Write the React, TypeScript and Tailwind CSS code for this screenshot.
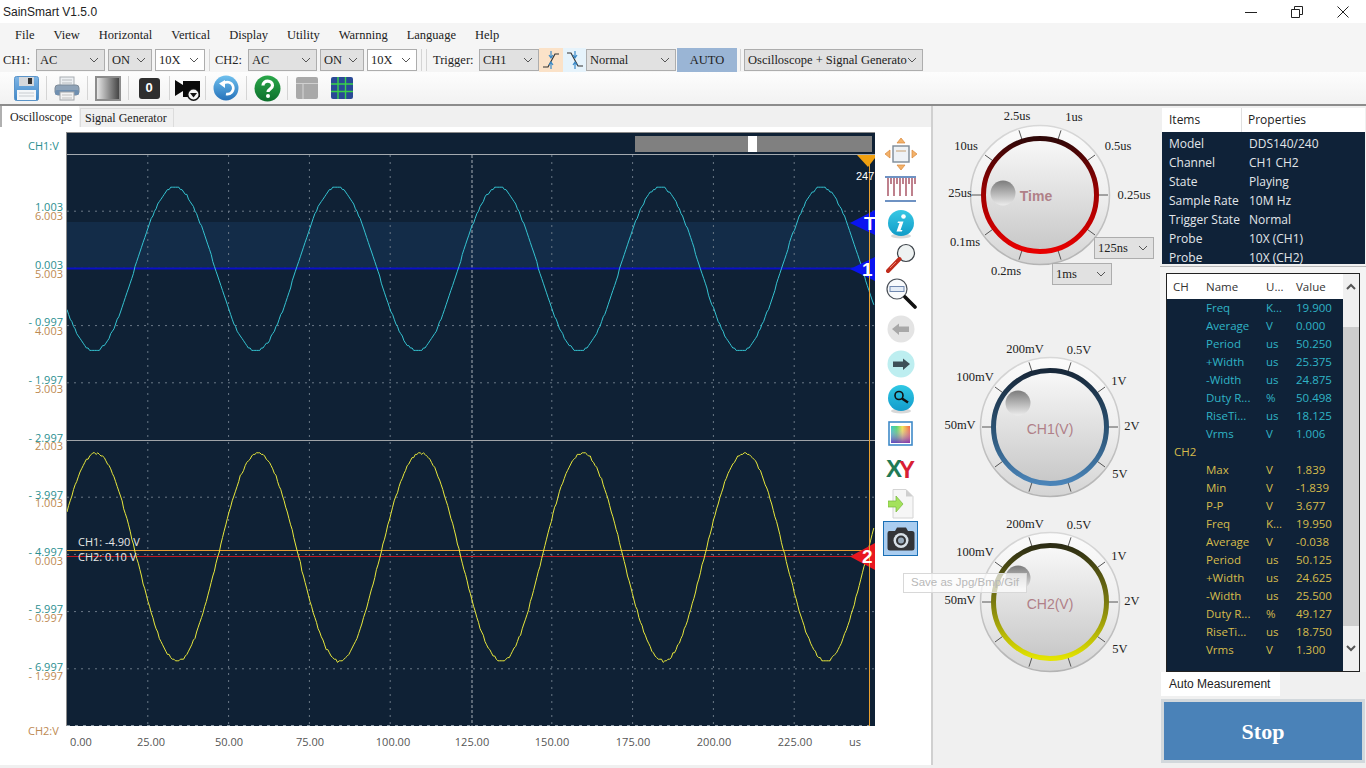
import React from "react";

const serif = "font-['Liberation_Serif',serif]";
const sans = "font-['Open_Sans',sans-serif]";

function Chevron() {
  return (
    <svg width="10" height="6" viewBox="0 0 10 6" className="shrink-0">
      <path d="M1 1 L5 5 L9 1" fill="none" stroke="#555" strokeWidth="1" />
    </svg>
  );
}

function Combo({ w, label, white }: { w: string; label: string; white?: boolean }) {
  return (
    <div className={`${w} h-[22px] shrink-0 flex items-center justify-between pl-[3px] pr-[5px] border border-[#adadad] text-[12.5px] text-[#222] whitespace-nowrap overflow-hidden ${white ? "bg-white" : "bg-[#e1e1e1]"}`}>
      <span>{label}</span>
      <Chevron />
    </div>
  );
}

const Sep = ({ h = "h-[22px]" }: { h?: string }) => <div className={`w-px ${h} bg-[#d4d4d4] shrink-0`} />;

function TrigIcon({ rising }: { rising?: boolean }) {
  return (
    <svg width="20" height="20" viewBox="0 0 20 20">
      <path d={rising ? "M2 17 H7 L14 4 H18" : "M2 3 H6 L13 16 H18"} fill="none" stroke="#333" strokeWidth="1.2" />
      <path d="M10 1 V7 M8 5 L10 8 L12 5 M10 19 V13 M8 15 L10 12 L12 15" fill="none" stroke="#3a8ac8" strokeWidth="1.2" />
    </svg>
  );
}

/* ---------- toolbar icons ---------- */
const FloppyIcon = () => (
  <svg width="25" height="25" viewBox="0 0 25 25">
    <defs>
      <linearGradient id="fl" x1="0" x2="0" y1="0" y2="1"><stop offset="0" stopColor="#7fb6e6" /><stop offset="1" stopColor="#3f87c8" /></linearGradient>
    </defs>
    <rect x="0.5" y="0.5" width="24" height="24" rx="2" fill="url(#fl)" stroke="#5b94c8" />
    <rect x="5" y="1" width="15" height="9" fill="#d5d8dc" />
    <rect x="14" y="2" width="4" height="6" fill="#333" />
    <rect x="3" y="14" width="19" height="10" fill="#f4f6f8" />
    <path d="M5 17 H20 M5 20 H20" stroke="#c8ccd0" />
  </svg>
);
const PrinterIcon = () => (
  <svg width="26" height="25" viewBox="0 0 26 25">
    <rect x="6" y="1" width="14" height="9" fill="#eceff2" stroke="#a8adb2" />
    <path d="M8 4 H18 M8 7 H18" stroke="#b8bcc0" />
    <rect x="1" y="9" width="24" height="10" rx="3" fill="#8fa3b8" stroke="#7d8a98" />
    <rect x="1" y="14" width="24" height="5" rx="2" fill="#6f8fb0" />
    <rect x="6" y="16" width="14" height="8" fill="#f2f2f2" stroke="#a0a4a8" />
    <path d="M8 19 H18 M8 22 H18" stroke="#c0c0c0" />
  </svg>
);
const GradSquare = () => (
  <svg width="26" height="25" viewBox="0 0 26 25">
    <defs>
      <linearGradient id="gs" x1="0" x2="1" y1="0" y2="0"><stop offset="0" stopColor="#eeeeee" /><stop offset="1" stopColor="#3e3e3e" /></linearGradient>
    </defs>
    <rect x="1" y="1" width="24" height="23" fill="url(#gs)" stroke="#8c8c8c" strokeWidth="2" />
  </svg>
);
const BlackCam = () => (
  <svg width="26" height="26" viewBox="0 0 26 26">
    <path d="M0 5 L8 10 V6 H25 V22 H8 V16 L0 21 Z" fill="#0a0a0a" />
    <circle cx="18.5" cy="19.5" r="6.5" fill="#111" />
    <circle cx="18.5" cy="19.5" r="5" fill="#f4f4f4" />
    <path d="M15 18 H22 L18.5 22.5 Z" fill="#111" />
  </svg>
);
const RefreshIcon = () => (
  <svg width="26" height="26" viewBox="0 0 26 26">
    <defs>
      <linearGradient id="rf" x1="0" x2="0" y1="0" y2="1"><stop offset="0" stopColor="#6fc0ee" /><stop offset="1" stopColor="#2672ba" /></linearGradient>
    </defs>
    <circle cx="13" cy="13" r="12.5" fill="url(#rf)" />
    <path d="M10 9 A6 6 0 1 1 13 19" fill="none" stroke="#fff" strokeWidth="2.6" />
    <path d="M6 8.5 L12 5 L12 13 Z" fill="#fff" />
  </svg>
);
const HelpIcon = () => (
  <svg width="27" height="27" viewBox="0 0 27 27">
    <defs>
      <linearGradient id="hp" x1="0" x2="0" y1="0" y2="1"><stop offset="0" stopColor="#2aa84a" /><stop offset="1" stopColor="#0d6f2c" /></linearGradient>
    </defs>
    <circle cx="13.5" cy="13.5" r="13" fill="url(#hp)" />
    <path d="M9 10.5 C9 4.5 18.5 5 18.5 10.5 C18.5 14 14 14 14 17" fill="none" stroke="#fff" strokeWidth="3.2" />
    <circle cx="14" cy="21" r="2" fill="#fff" />
  </svg>
);
const GrayTable = () => (
  <svg width="22" height="22" viewBox="0 0 22 22">
    <rect x="0" y="0" width="22" height="22" rx="2" fill="#a9a9a9" />
    <path d="M0 6.5 H22 M7 6.5 V22" stroke="#d0d0d0" strokeWidth="1.2" />
  </svg>
);
const BlueGrid = () => (
  <svg width="22" height="22" viewBox="0 0 22 22">
    <rect x="0" y="0" width="22" height="22" rx="2" fill="#2a4a96" />
    <path d="M0 7 H22 M0 14.5 H22 M7 0 V22 M14.5 0 V22" stroke="#39d24a" strokeWidth="1.4" />
  </svg>
);

/* ---------- side icons ---------- */
const side = {
  expand: (
    <svg width="32" height="32" viewBox="0 0 32 32">
      <rect x="8" y="8" width="16" height="16" fill="#eef2f6" stroke="#7c8a98" strokeWidth="1.4" />
      <path d="M11 13 H21" stroke="#c8a070" />
      <path d="M16 0 L20 5 H12 Z M16 32 L20 27 H12 Z M0 16 L5 12 V20 Z M32 16 L27 12 V20 Z" fill="#f3b26a" stroke="#d8863a" strokeWidth="0.7" />
    </svg>
  ),
  comb: (
    <svg width="32" height="26" viewBox="0 0 32 26">
      <path d="M0 1 H31 M0 25 H31" stroke="#3f6fb0" strokeWidth="1.3" />
      <path d="M3 2 V20 M9 2 V20 M15 2 V20 M21 2 V20 M27 2 V20 M6 2 V8 M12 2 V8 M18 2 V8 M24 2 V8 M30 2 V8" stroke="#8a1a30" strokeWidth="1.1" />
    </svg>
  ),
  info: (
    <svg width="28" height="30" viewBox="0 0 28 30">
      <defs>
        <linearGradient id="ci" x1="0" x2="0" y1="0" y2="1"><stop offset="0" stopColor="#38c8e4" /><stop offset="1" stopColor="#119cc8" /></linearGradient>
      </defs>
      <ellipse cx="14" cy="27" rx="10" ry="2.5" fill="#d8d8d8" />
      <circle cx="14" cy="14" r="13" fill="url(#ci)" />
      <circle cx="16.5" cy="7.5" r="2.3" fill="#fff" />
      <path d="M11 12.5 H16.5 L13.5 21 H15.5 L14.8 22.5 H9.5 L12.5 14 H10.5 Z" fill="#fff" />
    </svg>
  ),
  zoomIn: (
    <svg width="30" height="32" viewBox="0 0 30 32">
      <circle cx="20" cy="10" r="8.5" fill="#eef2f2" stroke="#3c4248" strokeWidth="1.2" />
      <path d="M13.5 16 L2 28" stroke="#c02c1c" strokeWidth="4" strokeLinecap="round" />
      <path d="M4 25 L10 19" stroke="#f08070" strokeWidth="1" />
    </svg>
  ),
  zoomOut: (
    <svg width="32" height="32" viewBox="0 0 32 32">
      <circle cx="12" cy="11" r="10" fill="#f8fafc" stroke="#4a5058" strokeWidth="1.2" />
      <rect x="5" y="8.5" width="14" height="5" fill="#e4ecf6" stroke="#7088b0" />
      <path d="M20 19 L30 29" stroke="#111" strokeWidth="3.6" strokeLinecap="round" />
    </svg>
  ),
  back: (
    <svg width="28" height="28" viewBox="0 0 28 28">
      <circle cx="14" cy="14" r="13.5" fill="#e4e4e4" />
      <path d="M5 14 L12 8.5 V11.5 H22 V17 H12 V20 Z" fill="#a8a8a8" />
    </svg>
  ),
  fwd: (
    <svg width="28" height="28" viewBox="0 0 28 28">
      <circle cx="14" cy="14" r="13.5" fill="#bdeef0" />
      <path d="M23 14 L16 8.5 V11.5 H6 V17 H16 V20 Z" fill="#3e5058" />
    </svg>
  ),
  search: (
    <svg width="28" height="30" viewBox="0 0 28 30">
      <defs>
        <linearGradient id="cs" x1="0" x2="0" y1="0" y2="1"><stop offset="0" stopColor="#30c8e4" /><stop offset="1" stopColor="#129ccc" /></linearGradient>
      </defs>
      <ellipse cx="14" cy="27" rx="10" ry="2.5" fill="#d8d8d8" />
      <circle cx="14" cy="14" r="13" fill="url(#cs)" />
      <circle cx="12" cy="11.5" r="4" fill="none" stroke="#111" strokeWidth="1.6" />
      <path d="M15 14.5 L21 18.5" stroke="#111" strokeWidth="2.4" />
    </svg>
  ),
  palette: (
    <svg width="25" height="25" viewBox="0 0 25 25">
      <defs>
        <linearGradient id="rb" x1="0" x2="1" y1="0" y2="0"><stop offset="0" stopColor="#20c0c0" /><stop offset="0.3" stopColor="#40d060" /><stop offset="0.6" stopColor="#f0e040" /><stop offset="1" stopColor="#f05030" /></linearGradient>
        <linearGradient id="rb2" x1="0" x2="0" y1="0" y2="1"><stop offset="0" stopColor="#fff" stopOpacity="0.1" /><stop offset="1" stopColor="#7030c0" stopOpacity="0.85" /></linearGradient>
      </defs>
      <rect x="1" y="1" width="23" height="23" fill="#fff" stroke="#3f8ac8" strokeWidth="1.6" />
      <rect x="3" y="5" width="19" height="17" fill="url(#rb)" />
      <rect x="3" y="5" width="19" height="17" fill="url(#rb2)" />
    </svg>
  ),
  xy: (
    <svg width="30" height="24" viewBox="0 0 30 24">
      <text x="0" y="20" fontFamily="Liberation Sans, sans-serif" fontWeight="700" fontSize="24" fill="#1f7a55">X</text>
      <text x="13" y="21" fontFamily="Liberation Sans, sans-serif" fontWeight="700" fontSize="24" fill="#d81f35">Y</text>
    </svg>
  ),
  doc: (
    <svg width="26" height="30" viewBox="0 0 26 30">
      <path d="M5 0.5 H18 L25 7.5 V29 H5 Z" fill="#f6f6f6" stroke="#d4d4d4" />
      <path d="M18 0.5 L25 7.5 H18 Z" fill="#cfcfcf" />
      <path d="M0 12 H8 V7 L15 15 L8 23 V18 H0 Z" fill="#a4e25c" stroke="#76b83a" strokeWidth="0.7" />
    </svg>
  ),
  camera: (
    <svg width="28" height="24" viewBox="0 0 28 24">
      <path d="M2 4 H8 L10 0.5 H19 L21 4 H25 Q27.5 4 27.5 6.5 V21 Q27.5 23.5 25 23.5 H3 Q0.5 23.5 0.5 21 V6.5 Q0.5 4 2 4 Z" fill="#333438" />
      <circle cx="14" cy="13.5" r="7.5" fill="#d8e0e8" />
      <circle cx="14" cy="13.5" r="5" fill="#333438" />
      <circle cx="14" cy="13.5" r="3" fill="#9ab" />
    </svg>
  ),
};

/* ---------- chart ---------- */
function wave(c: number, a: number, peak: number, period: number, q: number, noise: number) {
  let d = "";
  let i = 0;
  for (let x = 67; x <= 875; x += 1.62) {
    const n = noise * Math.sin(i * 12.9898) * Math.cos(i * 4.1414);
    const y = c - a * Math.cos((2 * Math.PI * (x - peak)) / period) + n;
    const qy = Math.round(y / q) * q;
    d += `${i === 0 ? "M" : "L"}${x.toFixed(1)} ${qy.toFixed(1)} `;
    i++;
  }
  return d;
}

const vGrid = [1, 2, 3, 4, 6, 7, 8, 9].map((k) => 67 + 80.8 * k);
const hGrid = [1, 2, 3, 4, 6, 7, 8, 9].map((k) => 154 + 57.2 * k);

const ch1Labels: [string, number][] = [
  ["1.003", 206], ["0.003", 264], ["- 0.997", 321], ["- 1.997", 379], ["- 2.997", 437],
  ["- 3.997", 494], ["- 4.997", 551], ["- 5.997", 608], ["- 6.997", 666],
];
const ch2Labels: [string, number][] = [
  ["6.003", 215], ["5.003", 273], ["4.003", 330], ["3.003", 388], ["2.003", 445],
  ["1.003", 502], ["0.003", 560], ["- 0.997", 617], ["- 1.997", 675],
];
const xLabels: [string, number][] = [
  ["0.00", 81], ["25.00", 151], ["50.00", 229], ["75.00", 310], ["100.00", 393],
  ["125.00", 472], ["150.00", 552], ["175.00", 633], ["200.00", 714], ["225.00", 795], ["us", 855],
];

function Chart() {
  return (
    <div className={`relative w-[883px] h-[637px] shrink-0 text-[11px] ${sans}`}>
      {ch1Labels.map(([t, y]) => (
        <span key={"a" + y} className="absolute right-[820px] text-[#2b8f90] leading-none whitespace-nowrap" style={{ top: y - 127 - 5 }}>{t}</span>
      ))}
      {ch2Labels.map(([t, y]) => (
        <span key={"b" + y} className="absolute right-[820px] text-[#bd8a52] leading-none whitespace-nowrap" style={{ top: y - 127 - 5 }}>{t}</span>
      ))}
      <span className="absolute left-[28px] top-[13px] leading-none text-[#2b8f90]">CH1:V</span>
      <span className="absolute left-[28px] top-[598px] leading-none text-[#bd8a52]">CH2:V</span>
      {xLabels.map(([t, x]) => (
        <span key={t} className="absolute top-[609px] -translate-x-1/2 leading-none text-[#555]" style={{ left: x }}>{t}</span>
      ))}
      <div className="absolute left-[66px] top-[5px] w-[809px] h-[594px] border-l border-t border-[#8a8a8a] bg-[#0f2135]">
        <svg width="808" height="593" viewBox="67 133 808 593" className="block">
          <rect x="67" y="222" width="808" height="46" fill="#132c48" />
          {vGrid.map((x) => (
            <line key={x} x1={x} x2={x} y1="155" y2="726" stroke="#6a7886" strokeDasharray="2 5" />
          ))}
          {hGrid.map((y) => (
            <line key={y} x1="67" x2="875" y1={y} y2={y} stroke="#6a7886" strokeDasharray="2 5" />
          ))}
          <line x1="472" x2="472" y1="155" y2="726" stroke="#a8b0b8" strokeDasharray="3 2" />
          <line x1="67" x2="875" y1="440.5" y2="440.5" stroke="#a0a4a8" />
          <line x1="67" x2="875" y1="154.5" y2="154.5" stroke="#a4aab0" />
          <line x1="67" x2="875" y1="725.5" y2="725.5" stroke="#8a98a4" strokeDasharray="3 5" />
          <rect x="635" y="136" width="237" height="16" fill="#808080" />
          <rect x="748" y="136" width="9" height="16" fill="#ffffff" />
          <line x1="67" x2="875" y1="268.5" y2="268.5" stroke="#0a10c8" strokeWidth="2" />
          <line x1="67" x2="875" y1="550.5" y2="550.5" stroke="#e8a030" />
          <line x1="67" x2="875" y1="556.5" y2="556.5" stroke="#c01820" />
          <path d={wave(269, 82, 175, 161.7, 2.4, 0)} fill="none" stroke="#35c4d2" />
          <path d={wave(557, 104, 96, 162.2, 1.6, 1)} fill="none" stroke="#e8e83c" />
          <path d="M850 223 L875 210 V235 Z" fill="#0a14f0" />
          <path d="M850 269 L875 257 V281 Z" fill="#0a14f0" />
          <path d="M850 556.5 L875 543 V570 Z" fill="#e81820" />
          <line x1="869.5" x2="869.5" y1="155" y2="726" stroke="#e8a030" />
          <path d="M857 155 H875 V158 L868 167 Z" fill="#f0a010" />
          <text x="856" y="180" fontSize="11" fill="#fff" fontFamily="Liberation Sans, sans-serif">247</text>
          <text x="864" y="230" fontSize="19" fontWeight="700" fill="#fff" fontFamily="Liberation Sans, sans-serif">T</text>
          <text x="862" y="276" fontSize="19" fontWeight="700" fill="#fff" fontFamily="Liberation Sans, sans-serif">1</text>
          <text x="862" y="563" fontSize="19" fontWeight="700" fill="#fff" fontFamily="Liberation Sans, sans-serif">2</text>
        </svg>
      </div>
      <span className="absolute left-[78px] top-[409px] text-[#e8e8e8] leading-none whitespace-nowrap">CH1: -4.90 V</span>
      <span className="absolute left-[78px] top-[424px] text-[#e8e8e8] leading-none whitespace-nowrap">CH2: 0.10 V</span>
    </div>
  );
}

/* ---------- knobs ---------- */
type KnobLabel = [string, number, number];
function Knob({ id, cx, cy, h, name, bold, ringTop, ringMid, ringBottom, dot, labels, children }: {
  id: string; cx: number; cy: number; h: string; name: string; bold?: boolean;
  ringTop: string; ringMid: string; ringBottom: string; dot: [number, number]; labels: KnobLabel[]; children?: React.ReactNode;
}) {
  const ticks = [0, 36, 72, 108, 144, 180, 216, 252, 288, 324];
  return (
    <div className={`relative w-[227px] ${h} shrink-0`}>
      <svg width="150" height="150" viewBox="-75 -75 150 150" className="absolute" style={{ left: cx - 75, top: cy - 75 }}>
        <defs>
          <linearGradient id={id + "o"} x1="0" x2="0" y1="0" y2="1"><stop offset="0" stopColor="#fbfbfb" /><stop offset="0.5" stopColor="#efefef" /><stop offset="1" stopColor="#d4d4d4" /></linearGradient>
          <linearGradient id={id + "e"} x1="0" x2="0" y1="0" y2="1"><stop offset="0" stopColor="#d8d8d8" /><stop offset="1" stopColor="#b4b4b4" /></linearGradient>
          <linearGradient id={id + "i"} x1="0" x2="0" y1="0" y2="1"><stop offset="0" stopColor="#f8f8f8" /><stop offset="1" stopColor="#c8c8c8" /></linearGradient>
          <linearGradient id={id + "r"} x1="0" x2="0" y1="0" y2="1"><stop offset="0" stopColor={ringTop} /><stop offset="0.5" stopColor={ringMid} /><stop offset="1" stopColor={ringBottom} /></linearGradient>
          <linearGradient id={id + "d"} x1="0" x2="0" y1="0" y2="1"><stop offset="0" stopColor="#7c7c7c" /><stop offset="1" stopColor="#ececec" /></linearGradient>
        </defs>
        <circle r="69.5" fill={`url(#${id}o)`} stroke={`url(#${id}e)`} strokeWidth="1.5" />
        {ticks.map((a) => (
          <line key={a} x1={57 * Math.cos((a * Math.PI) / 180)} y1={57 * Math.sin((a * Math.PI) / 180)} x2={68 * Math.cos((a * Math.PI) / 180)} y2={68 * Math.sin((a * Math.PI) / 180)} stroke="#555" />
        ))}
        <circle r="55" fill={`url(#${id}i)`} />
        <circle r="56.5" fill="none" stroke={`url(#${id}r)`} strokeWidth="5" />
        <circle cx={dot[0]} cy={dot[1]} r="12.5" fill={`url(#${id}d)`} />
      </svg>
      <span className={`absolute -translate-x-1/2 -translate-y-1/2 font-['Liberation_Sans',sans-serif] text-[14px] text-[#b08088] leading-none ${bold ? "font-bold" : ""}`} style={{ left: cx + (bold ? -4 : 0), top: cy + (bold ? 1 : 2) }}>{name}</span>
      {labels.map(([t, x, y]) => (
        <span key={t} className={`absolute -translate-x-1/2 -translate-y-1/2 ${serif} text-[12.5px] text-[#222] leading-none whitespace-nowrap`} style={{ left: x, top: y }}>{t}</span>
      ))}
      {children}
    </div>
  );
}

const chLabels = (o: number): KnobLabel[] => [
  ["200mV", 1025 - 933, 349 - 340 + o], ["0.5V", 1079 - 933, 350 - 340 + o], ["1V", 1119 - 933, 381 - 340 + o],
  ["2V", 1132 - 933, 426 - 340 + o], ["5V", 1120 - 933, 474 - 340 + o], ["100mV", 975 - 933, 377 - 340 + o], ["50mV", 960 - 933, 425 - 340 + o],
];

/* ---------- tables ---------- */
const info = [
  ["Model", "DDS140/240"], ["Channel", "CH1 CH2"], ["State", "Playing"], ["Sample Rate", "10M Hz"],
  ["Trigger State", "Normal"], ["Probe", "10X (CH1)"], ["Probe", "10X (CH2)"],
];
const meas1 = [
  ["Freq", "K...", "19.900"], ["Average", "V", "0.000"], ["Period", "us", "50.250"], ["+Width", "us", "25.375"],
  ["-Width", "us", "24.875"], ["Duty R...", "%", "50.498"], ["RiseTi...", "us", "18.125"], ["Vrms", "V", "1.006"],
];
const meas2 = [
  ["Max", "V", "1.839"], ["Min", "V", "-1.839"], ["P-P", "V", "3.677"], ["Freq", "K...", "19.950"], ["Average", "V", "-0.038"],
  ["Period", "us", "50.125"], ["+Width", "us", "24.625"], ["-Width", "us", "25.500"], ["Duty R...", "%", "49.127"],
  ["RiseTi...", "us", "18.750"], ["Vrms", "V", "1.300"],
];
const cols = "grid grid-cols-[39px_60px_30px_47px] items-center h-[18px]";

function MeasRow({ r, c }: { r: string[]; c: string }) {
  return (
    <div className={`${cols} ${c}`}>
      <span />
      <span>{r[0]}</span>
      <span>{r[1]}</span>
      <span>{r[2]}</span>
    </div>
  );
}

const menus = ["File", "View", "Horizontal", "Vertical", "Display", "Utility", "Warnning", "Language", "Help"];
const sideKeys = ["expand", "comb", "info", "zoomIn", "zoomOut", "back", "fwd", "search", "palette", "xy", "doc"] as const;

export default function App() {
  return (
    <div className={`relative w-[1366px] h-[768px] overflow-hidden bg-[#f0f0f0] flex flex-col ${serif}`}>
      {/* title bar */}
      <div className="h-[23px] bg-white flex items-center justify-between shrink-0">
        <span className="pl-[3px] font-['Liberation_Sans',sans-serif] text-[12px] text-[#222]">SainSmart V1.5.0</span>
        <div className="flex items-center h-full">
          <div className="w-[46px] flex justify-center"><svg width="12" height="12"><path d="M0 6.5 H12" stroke="#222" /></svg></div>
          <div className="w-[46px] flex justify-center"><svg width="12" height="12"><path d="M0.5 3.5 H8.5 V11.5 H0.5 Z M3.5 3 V0.5 H11.5 V8.5 H9" fill="none" stroke="#222" /></svg></div>
          <div className="w-[46px] flex justify-center"><svg width="12" height="12"><path d="M0.5 0.5 L11.5 11.5 M11.5 0.5 L0.5 11.5" stroke="#222" /></svg></div>
        </div>
      </div>
      {/* menu */}
      <div className="h-[25px] bg-[#f5f5f5] flex items-center gap-[19px] pl-[15px] text-[12.5px] text-[#222] shrink-0">
        {menus.map((m) => <span key={m}>{m}</span>)}
      </div>
      {/* toolbar 1 */}
      <div className="h-[24px] bg-[#f5f5f5] flex items-center text-[12.5px] text-[#222] shrink-0">
        <span className="w-[36px] pl-[3px] shrink-0">CH1:</span>
        <Combo w="w-[69px]" label="AC" />
        <div className="w-[3px]" />
        <Combo w="w-[44px]" label="ON" />
        <div className="w-[3px]" />
        <Combo w="w-[50px]" label="10X" white />
        <div className="w-[4px]" /><Sep /><div className="w-[5px]" />
        <span className="w-[33px] shrink-0">CH2:</span>
        <Combo w="w-[69px]" label="AC" />
        <div className="w-[3px]" />
        <Combo w="w-[44px]" label="ON" />
        <div className="w-[3px]" />
        <Combo w="w-[50px]" label="10X" white />
        <div className="w-[4px]" /><Sep /><div className="w-[4px]" /><Sep /><div className="w-[6px]" />
        <span className="w-[46px] shrink-0">Trigger:</span>
        <Combo w="w-[60px]" label="CH1" />
        <div className="w-[24px] h-[24px] bg-[#fbe2c8] flex items-center justify-center shrink-0"><TrigIcon rising /></div>
        <div className="w-[23px] h-[24px] bg-[#e6f3fb] flex items-center justify-center shrink-0"><TrigIcon /></div>
        <Combo w="w-[90px]" label="Normal" />
        <div className="w-[60px] h-[24px] ml-px bg-[#9ab5d5] flex items-center justify-center shrink-0">AUTO</div>
        <div className="w-[3px]" /><Sep /><div className="w-[3px]" />
        <Combo w="w-[179px]" label="Oscilloscope + Signal Generato" />
      </div>
      {/* toolbar 2 */}
      <div className="h-[32px] bg-[linear-gradient(#fdfdfd,#f2f2f2)] flex items-center pl-[6px] shrink-0">
        <div className="w-[40px] flex justify-center"><FloppyIcon /></div><Sep h="h-[24px]" />
        <div className="w-[40px] flex justify-center"><PrinterIcon /></div><Sep h="h-[24px]" />
        <div className="w-[40px] flex justify-center"><GradSquare /></div><Sep h="h-[24px]" />
        <div className="w-[40px] flex justify-center">
          <div className="w-[21px] h-[21px] rounded-[3px] bg-[#2e2e2e] text-white text-[13px] font-bold font-['Liberation_Sans',sans-serif] flex items-center justify-center">0</div>
        </div><Sep h="h-[24px]" />
        <div className="w-[35px] flex justify-center"><BlackCam /></div><Sep h="h-[24px]" />
        <div className="w-[40px] flex justify-center"><RefreshIcon /></div><Sep h="h-[24px]" />
        <div className="w-[40px] flex justify-center"><HelpIcon /></div><Sep h="h-[24px]" />
        <div className="w-[38px] flex justify-center"><GrayTable /></div>
        <div className="w-[32px] flex justify-center"><BlueGrid /></div>
      </div>
      {/* main */}
      <div className="flex h-[661px] border-t-2 border-[#8c8c8c] shrink-0">
        {/* left */}
        <div className="w-[933px] h-[659px] flex flex-col shrink-0 border-r-2 border-[#d0d0d0] border-l-2 border-l-[#b0b0b0]">
          <div className="h-[21px] flex items-end text-[12px] text-[#222] shrink-0 bg-[#f0f0f0]">
            <div className="w-[77px] h-[21px] bg-white flex items-center pl-[8px]">Oscilloscope</div>
            <div className="w-[94px] h-[19px] ml-px bg-[#f0f0f0] border border-b-0 border-[#dcdcdc] flex items-center pl-[4px] whitespace-nowrap">Signal Generator</div>
          </div>
          <div className="flex-1 bg-white flex -ml-[2px]">
            <Chart />
            <div className="w-[35px] ml-[0px] pt-[9px] flex flex-col items-center">
              {sideKeys.map((k) => (
                <div key={k} className="w-[35px] h-[35px] flex items-center justify-center shrink-0">{side[k]}</div>
              ))}
              <div className="w-[35px] h-[35px] bg-[#aacdf0] border border-[#1a6fb5] flex items-center justify-center shrink-0">{side.camera}</div>
            </div>
          </div>
        </div>
        {/* knobs */}
        <div className="w-[227px] flex flex-col shrink-0 bg-[#f0f0f0]">
          <Knob id="t" cx={107} cy={89} h="h-[189px]" name="Time" bold ringTop="#300808" ringMid="#a00000" ringBottom="#e80000" dot={[-37, -2]}
            labels={[["2.5us", 84, 10], ["1us", 141, 11], ["0.5us", 185, 40], ["0.25us", 201, 89], ["25us", 27, 87], ["10us", 33, 40], ["0.1ms", 32, 136], ["0.2ms", 73, 165]]}>
            <div className={`absolute left-[161px] top-[131px] text-[12.5px] text-[#222]`}><Combo w="w-[60px]" label="125ns" /></div>
            <div className={`absolute left-[119px] top-[157px] text-[12.5px] text-[#222]`}><Combo w="w-[60px]" label="1ms" /></div>
          </Knob>
          <div className="h-[45px] shrink-0" />
          <Knob id="c1" cx={117} cy={87} h="h-[175px]" name="CH1(V)" ringTop="#18283a" ringMid="#2a5070" ringBottom="#4a84b8" dot={[-32, -24]} labels={chLabels(0)} />
          <Knob id="c2" cx={117} cy={87} h="h-[175px]" name="CH2(V)" ringTop="#2c2c14" ringMid="#7a7a10" ringBottom="#e4e400" dot={[-32, -24]} labels={chLabels(0)} />
        </div>
        {/* right */}
        <div className={`w-[206px] flex flex-col shrink-0 ${sans}`}>
          <div className="mt-[2px] ml-[2px] mr-[1px] h-[156px] overflow-hidden bg-[#0f2238] text-[12px] text-[#e2e6ea] shrink-0">
            <div className="h-[24px] bg-white text-[#222] flex items-center">
              <span className="w-[80px] pl-[7px] h-full flex items-center border-r border-[#e0e0e0]">Items</span>
              <span className="pl-[6px]">Properties</span>
            </div>
            <div className="pt-[2px]">
              {info.map((r, i) => (
                <div key={i} className="h-[19px] flex items-center">
                  <span className="w-[80px] pl-[7px] whitespace-nowrap">{r[0]}</span>
                  <span className="pl-[7px]">{r[1]}</span>
                </div>
              ))}
            </div>
          </div>
          <div className="mt-[2px] h-[406px] bg-[#f4f4f4] border-t border-[#b8b8b8] pl-[6px] pr-[6px] pt-[6px] shrink-0">
            <div className="h-[399px] flex bg-[#0f2238] border border-[#222]">
              <div className="w-[176px] flex flex-col text-[11.5px]">
                <div className="h-[25px] bg-white text-[#333] grid grid-cols-[32px_60px_30px_54px] items-center">
                  <span className="pl-[6px]">CH</span>
                  <span className="pl-[7px]">Name</span>
                  <span className="pl-[7px]">U...</span>
                  <span className="pl-[7px]">Value</span>
                </div>
                {meas1.map((r, i) => <MeasRow key={i} r={r} c="text-[#2fb4c6]" />)}
                <div className="h-[18px] flex items-center pl-[7px] text-[#d6bc4c]">CH2</div>
                {meas2.map((r, i) => <MeasRow key={i} r={r} c="text-[#d6bc4c]" />)}
              </div>
              <div className="w-[17px] bg-[#f0f0f0] flex flex-col h-full">
                <div className="h-[25px] flex items-center justify-center"><svg width="10" height="7"><path d="M1 6 L5 2 L9 6" fill="none" stroke="#555" strokeWidth="2" /></svg></div>
                <div className="mt-[28px] h-[299px] bg-[#cdcdcd]" />
                <div className="flex-1 flex items-center justify-center"><svg width="10" height="7"><path d="M1 1 L5 5 L9 1" fill="none" stroke="#555" strokeWidth="2" /></svg></div>
              </div>
            </div>
          </div>
          <div className="h-[25px] flex shrink-0 ml-px">
            <div className="w-[119px] h-[24px] bg-white text-[12px] text-[#222] flex items-center pl-[8px] font-['Liberation_Sans',sans-serif]">Auto Measurement</div>
          </div>
          <div className={`ml-px mr-px mt-[2px] h-[64px] bg-[#4a82b8] border-[3px] border-[#d2d8dc] flex items-center justify-center text-white font-bold text-[22px] shrink-0 ${serif}`}>Stop</div>
        </div>
      </div>
      {/* tooltip */}
      <div className="absolute left-[903px] top-[573px] w-[124px] h-[20px] bg-white/70 border border-[#d8d8d8] flex items-center justify-center text-[11.5px] text-[#b8b8b8] font-['Liberation_Sans',sans-serif] whitespace-nowrap">Save as Jpg/Bmp/Gif</div>
    </div>
  );
}
